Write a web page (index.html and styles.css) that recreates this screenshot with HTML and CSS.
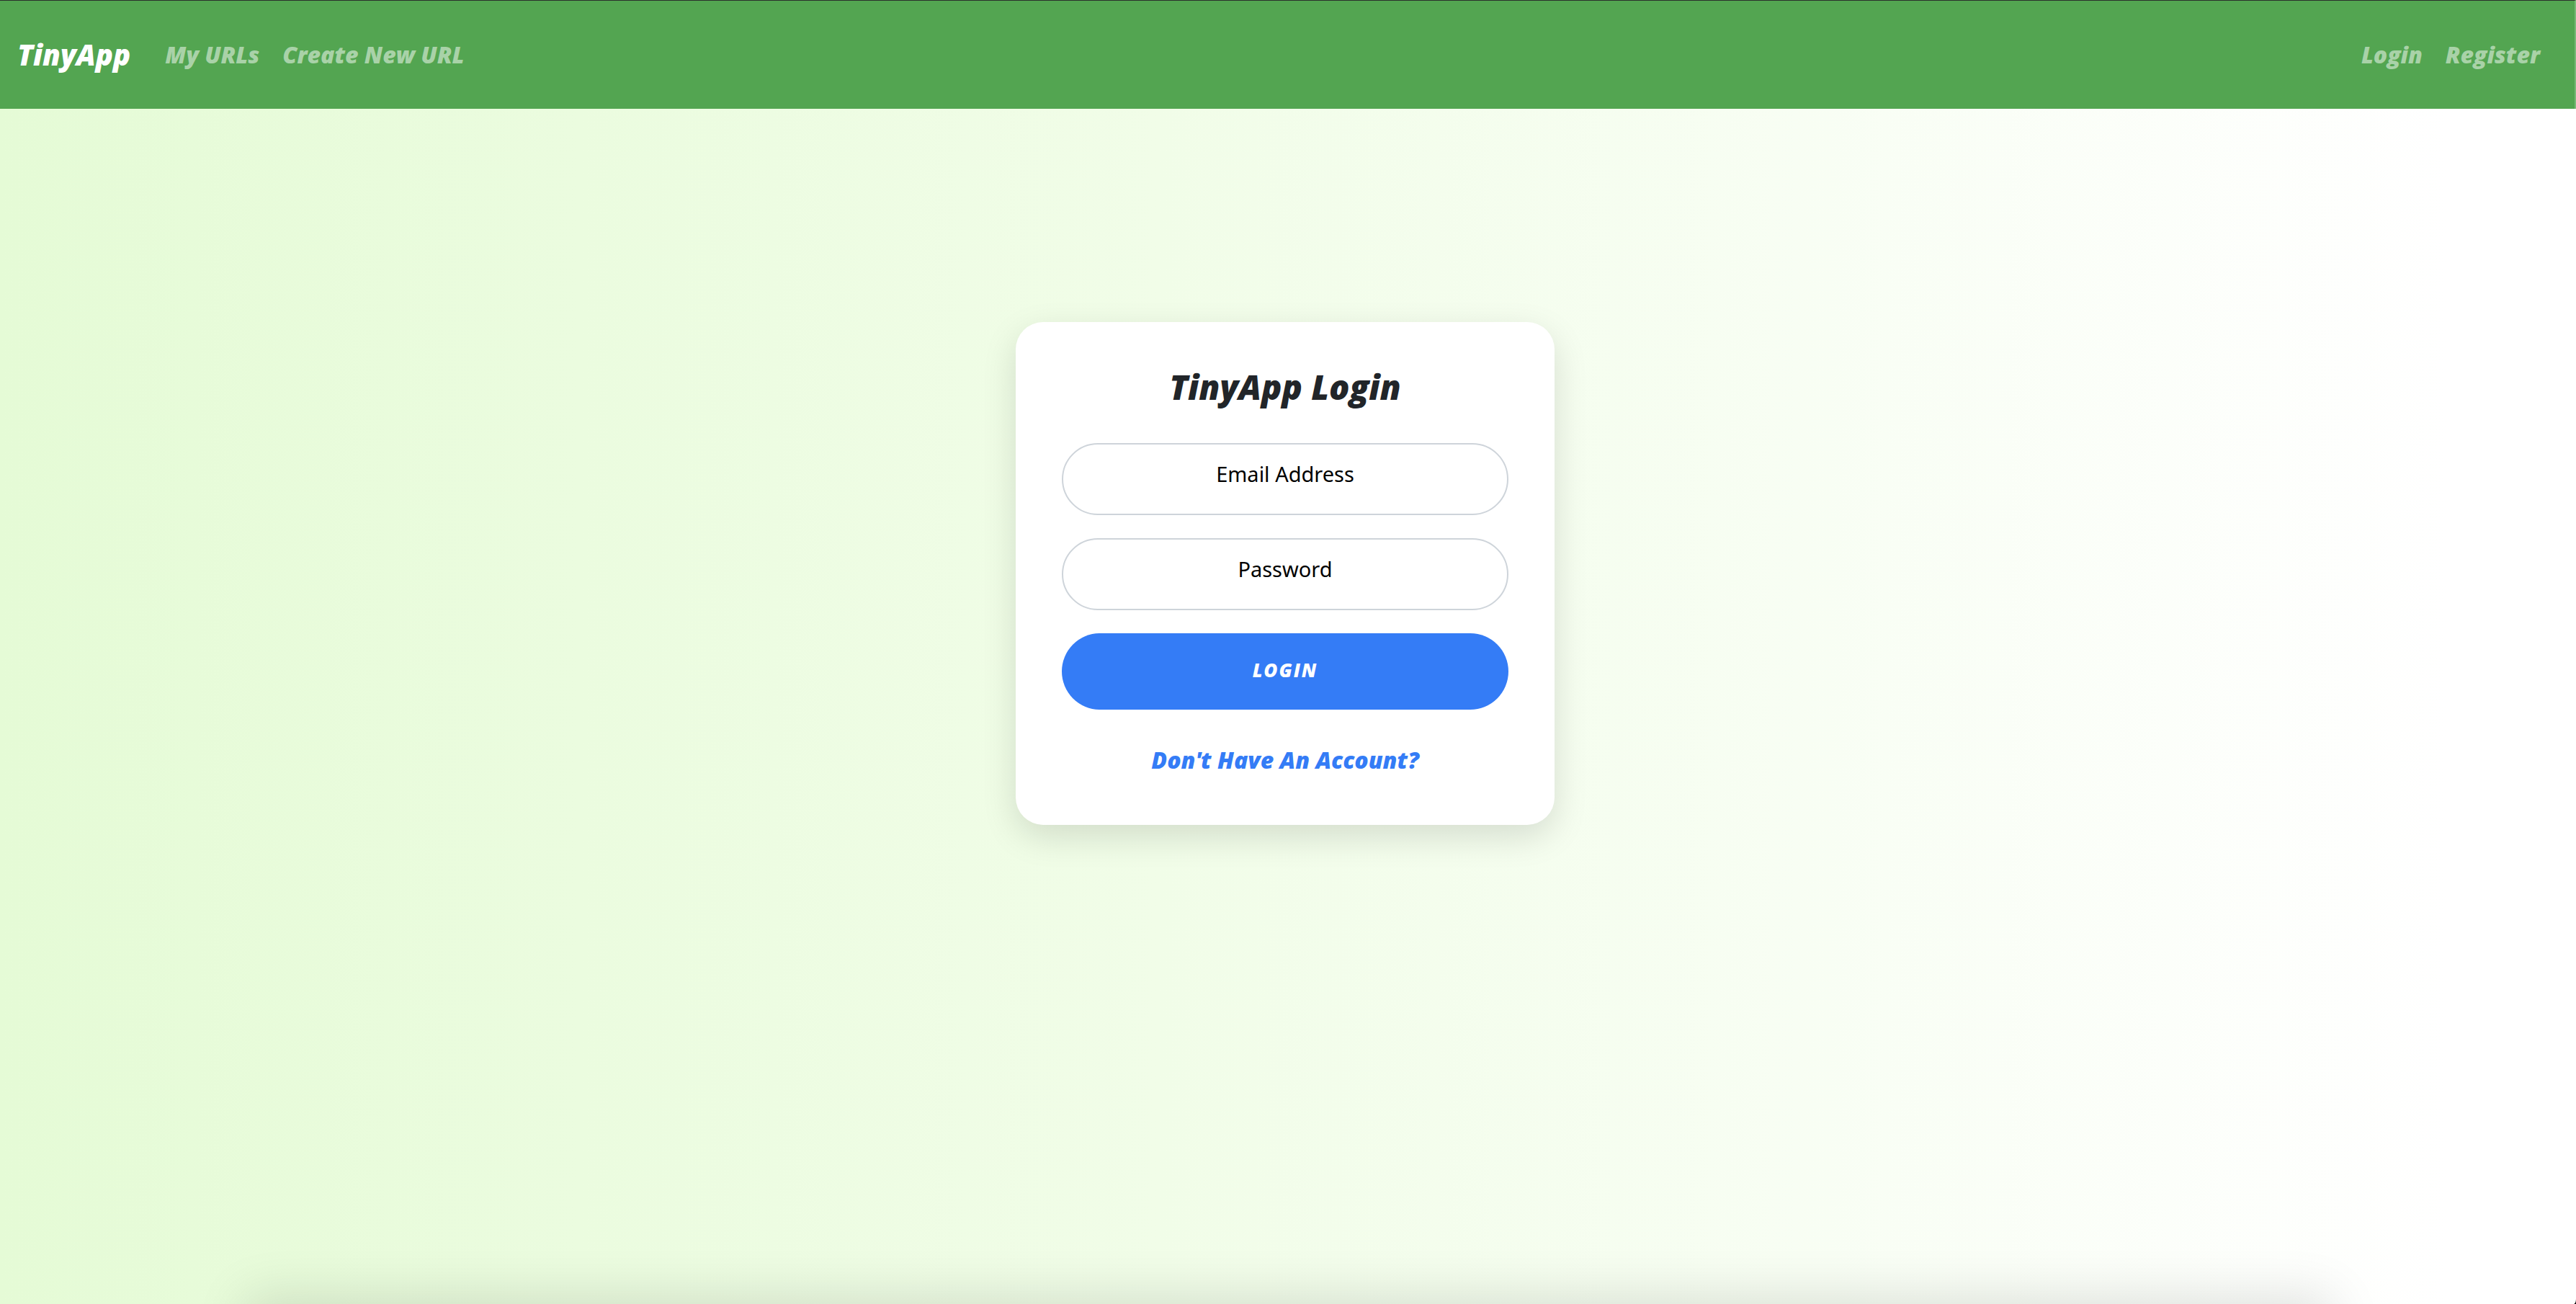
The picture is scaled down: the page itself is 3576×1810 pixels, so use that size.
FILE: index.html
```html
<!DOCTYPE html>
<html lang="en">
<head>
  <meta charset="utf-8">
  <meta name="viewport" content="width=device-width, initial-scale=1">
  <title>TinyApp</title>
  <link rel="stylesheet" href="styles.css">
</head>
<body>
  <div class="page">
    <nav class="navbar">
      <a class="brand" href="#">TinyApp</a>
      <div class="nav-links">
        <a class="nav-link" href="#">My URLs</a>
        <a class="nav-link" href="#">Create New URL</a>
      </div>
      <div class="nav-links nav-account">
        <a class="nav-link" href="#">Login</a>
        <a class="nav-link" href="#">Register</a>
      </div>
    </nav>
    <main class="content">
      <form class="card">
        <h1 class="card-title">TinyApp Login</h1>
        <div class="fields">
          <input class="field" type="email" name="email" placeholder="Email Address" aria-label="Email Address">
          <input class="field" type="password" name="password" placeholder="Password" aria-label="Password">
          <button class="submit" type="submit">LOGIN</button>
        </div>
        <a class="register-link" href="#">Don't Have An Account?</a>
      </form>
    </main>
    <div class="bottom-shadow" aria-hidden="true"></div>
  </div>
</body>
</html>
```
FILE: styles.css
```css
* {
  box-sizing: border-box;
}

html {
  background: #000;
}

body {
  margin: 0;
  font-family: "Open Sans", sans-serif;
}

.page {
  position: relative;
  display: flex;
  flex-direction: column;
  min-height: 100vh;
  overflow: hidden;
  background: linear-gradient(to right, #e5fbd6, #f1fde8 45%, #ffffff 95%);
  border-bottom-right-radius: 3px 7px;
}

.navbar {
  display: flex;
  align-items: center;
  gap: 48px;
  padding: 45px 48px 45px 24px;
  background: #53a551;
  border-top: 1px solid #2b2f2b;
  border-right: 2px solid #78b877;
  font-size: 32px;
  font-style: italic;
  font-weight: 800;
}

.brand {
  color: #fff;
  font-size: 40px;
  line-height: 60px;
  text-decoration: none;
}

.nav-links {
  display: flex;
  gap: 32px;
}

.nav-account {
  margin-left: auto;
}

.nav-link {
  color: #a9d2a8;
  line-height: 48px;
  text-decoration: none;
}

.content {
  display: flex;
  justify-content: center;
  padding: 296px 8px 64px 0;
}

.card {
  display: flex;
  flex-direction: column;
  width: 100%;
  max-width: 748px;
  padding: 62px 64px 66px;
  background: #fff;
  border-radius: 38px;
  box-shadow: 0 16px 48px rgba(0, 0, 0, 0.13);
}

.card-title {
  margin: 0 0 50px;
  color: #212529;
  font-size: 47px;
  font-style: italic;
  font-weight: 800;
  line-height: 56px;
  text-align: center;
}

.fields {
  display: flex;
  flex-direction: column;
  gap: 32px;
}

.field {
  width: 100%;
  height: 100px;
  padding: 0 24px 16px;
  background: #fff;
  border: 2px solid #ced4da;
  border-radius: 50px;
  color: #000;
  font-family: "Noto Sans", sans-serif;
  font-size: 29px;
  text-align: center;
}

.field::placeholder {
  color: #000;
  opacity: 1;
}

.submit {
  height: 106px;
  padding: 0 24px 4px;
  background: #347cf6;
  border: 0;
  border-radius: 53px;
  color: #fff;
  font-family: inherit;
  font-size: 26px;
  font-style: italic;
  font-weight: 800;
  letter-spacing: 2px;
}

.register-link {
  align-self: center;
  margin-top: 46px;
  color: #347cf6;
  font-size: 32px;
  font-style: italic;
  font-weight: 800;
  line-height: 48px;
  text-decoration: none;
}

/* Soft shadow cast upward from just below the page */
.bottom-shadow {
  position: absolute;
  top: 100%;
  left: 50%;
  width: 81%;
  height: 100px;
  transform: translateX(-50%);
  box-shadow: 0 -10px 72px rgba(0, 0, 0, 0.12);
}
```
